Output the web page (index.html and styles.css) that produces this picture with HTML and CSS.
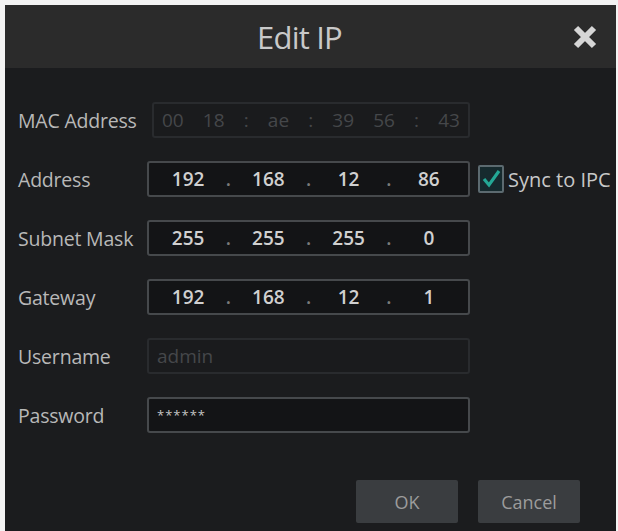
FILE: index.html
```html
<!DOCTYPE html>
<html lang="en">
<head>
  <meta charset="UTF-8">
  <title>Edit IP</title>
  <link rel="stylesheet" href="styles.css">
</head>
<body>
  <div class="dialog">
    <div class="titlebar">
      <h1>Edit IP</h1>
      <button class="close" title="Close">
        <svg width="26" height="26" viewBox="0 0 26 26">
          <path d="M4 4 L22 22 M22 4 L4 22" stroke="#d6d6d6" stroke-width="6" fill="none"/>
        </svg>
      </button>
    </div>

    <div class="content">
      <div class="form">
        <label class="lbl">MAC Address</label>
        <div class="field field-off mac">
          <span>00</span><span>18</span><span>:</span><span>ae</span><span>:</span><span>39</span><span>56</span><span>:</span><span>43</span>
        </div>
        <div></div>

        <label class="lbl">Address</label>
        <div class="field ip">
          <span>192</span><i>.</i><span>168</span><i>.</i><span>12</span><i>.</i><span>86</span>
        </div>
        <label class="sync"><span class="check"><svg width="20" height="20" viewBox="0 0 20 20"><path d="M3 10 L8 16 L18 2" stroke="#24a896" stroke-width="3.2" fill="none"/></svg></span>Sync to IPC</label>

        <label class="lbl">Subnet Mask</label>
        <div class="field ip">
          <span>255</span><i>.</i><span>255</span><i>.</i><span>255</span><i>.</i><span>0</span>
        </div>
        <div></div>

        <label class="lbl">Gateway</label>
        <div class="field ip">
          <span>192</span><i>.</i><span>168</span><i>.</i><span>12</span><i>.</i><span>1</span>
        </div>
        <div></div>

        <label class="lbl">Username</label>
        <div class="field field-off text">admin</div>
        <div></div>

        <label class="lbl">Password</label>
        <div class="field text pass">******</div>
        <div></div>
      </div>

      <div class="actions">
        <button class="btn">OK</button>
        <button class="btn">Cancel</button>
      </div>
    </div>
  </div>
</body>
</html>
```

FILE: styles.css
```css
body {
  margin: 5px 2px 0 5px;
  background-color: #f3f3f3;
  font-family: 'Open Sans', 'Liberation Sans', sans-serif;
  overflow: hidden;
}

.dialog {
  height: 526px;
  background-color: #1b1c1e;
  display: flex;
  flex-direction: column;
}

.titlebar {
  height: 63px;
  background-color: #2b2b2b;
  display: flex;
  align-items: center;
}

.titlebar h1 {
  flex: 1;
  margin: 0;
  padding-left: 22px;
  text-align: center;
  font-size: 31px;
  font-weight: 400;
  color: #c9c9c9;
  letter-spacing: -0.8px;
}

.close {
  background: none;
  border: none;
  padding: 0;
  margin-right: 18px;
  width: 26px;
  height: 26px;
  cursor: pointer;
}

.content {
  flex: 1;
  padding: 34px 0 0 13px;
}

.form {
  display: grid;
  grid-template-columns: 121px 323px auto;
  column-gap: 8px;
  row-gap: 23px;
  align-items: center;
}

.lbl {
  font-size: 19.5px;
  color: #b8b8b8;
  white-space: nowrap;
  letter-spacing: -0.2px;
}

.field {
  height: 36px;
  box-sizing: border-box;
  border: 2px solid #46494c;
  border-radius: 3px;
  background-color: #131416;
  color: #d0d0d0;
  font-size: 19px;
  display: flex;
  align-items: center;
}

.field-off {
  border-color: #292b2e;
  background-color: #1a1b1d;
  color: #45474a;
}

.ip {
  padding: 0 4px;
  font-weight: 600;
}

.ip span {
  flex: 1;
  text-align: center;
}

.ip i {
  font-style: normal;
  width: 10px;
  text-align: center;
  color: #7a7a7a;
}

.mac {
  margin-left: 5px;
  padding: 0 8px;
  justify-content: space-between;
}

.text {
  padding: 0 8px;
}

.pass {
  font-size: 13px;
  letter-spacing: 1px;
  color: #c4c4c4;
}

.sync {
  display: flex;
  align-items: center;
  gap: 4px;
  font-size: 20px;
  color: #c8c8c8;
  white-space: nowrap;
}

.check {
  width: 26px;
  height: 28px;
  box-sizing: border-box;
  border: 2px solid #5c6a70;
  border-radius: 2px;
  background-color: #162a2e;
  display: flex;
  align-items: center;
  justify-content: center;
}

.actions {
  display: flex;
  justify-content: flex-end;
  gap: 20px;
  margin-top: 47px;
  padding-right: 36px;
}

.btn {
  width: 102px;
  height: 43px;
  border: none;
  border-radius: 2px;
  background-color: #3a3d40;
  color: #9c9c9c;
  font-family: 'Open Sans', 'Liberation Sans', sans-serif;
  font-size: 18px;
  cursor: pointer;
}
```
